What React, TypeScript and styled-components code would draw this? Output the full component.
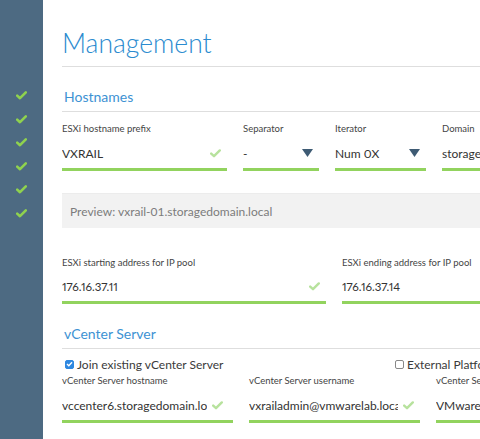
import React from "react";
import styled, { createGlobalStyle } from "styled-components";

const GlobalStyle = createGlobalStyle`
  html, body { margin: 0; padding: 0; background: #fff; overflow: hidden; }
  body { font-family: Lato, "Open Sans", Arial, sans-serif; color: #333; }
  * { box-sizing: border-box; }
`;

const Page = styled.div`
  display: flex;
  width: 480px;
  height: 439px;
  overflow: hidden;
`;

const Sidebar = styled.aside`
  flex: 0 0 43px;
  background: #4d6a82;
  display: flex;
  flex-direction: column;
  align-items: center;
  padding-top: 91px;
  gap: 14.6px;
`;

const Main = styled.main`
  flex: 1;
  min-width: 0;
  padding-left: 19px;
  overflow: hidden;
`;

const Title = styled.h1`
  margin: 29px 0 0;
  padding-bottom: 9px;
  font-size: 26.5px;
  line-height: 28px;
  font-weight: 300;
  color: #2b8bcf;
  border-bottom: 1px solid #dedede;
  white-space: nowrap;
`;

const SectionTitle = styled.h2<{ $top: number }>`
  margin: ${(p) => p.$top}px 0 0;
  padding: 0 0 5px 2px;
  font-size: 14px;
  line-height: 18px;
  font-weight: 400;
  color: #3d92d3;
  border-bottom: 1px solid #dedede;
  white-space: nowrap;
`;

const FieldRow = styled.div<{ $cols: string; $top: number }>`
  display: grid;
  grid-template-columns: ${(p) => p.$cols};
  column-gap: 16px;
  margin-top: ${(p) => p.$top}px;
  width: 600px;
`;

const Field = styled.div`
  display: flex;
  flex-direction: column;
  min-width: 0;
`;

const Label = styled.div`
  font-size: 9.5px;
  line-height: 12px;
  color: #444;
  white-space: nowrap;
`;

const InputLine = styled.div<{ $gap: number; $pad?: number }>`
  display: flex;
  align-items: center;
  gap: 5px;
  margin-top: ${(p) => p.$gap}px;
  height: 33px;
  border-bottom: 3px solid #92d35e;
  padding-right: ${(p) => p.$pad ?? 6}px;
  overflow: hidden;
`;

const Value = styled.span<{ $size?: number }>`
  flex: 1;
  min-width: 0;
  font-size: ${(p) => p.$size ?? 12}px;
  font-variant-numeric: proportional-nums;
  color: #333;
  white-space: nowrap;
  overflow: hidden;
`;

const Preview = styled.div`
  margin-top: 22px;
  height: 35px;
  width: 480px;
  background: #f2f2f2;
  border-top: 1px solid #ececec;
  display: flex;
  align-items: center;
  padding-left: 8px;
  font-size: 12px;
  color: #7c7c7c;
  white-space: nowrap;
`;

const CheckRow = styled.div`
  display: flex;
  margin-top: 8px;
  height: 14px;
  align-items: center;
  padding-left: 3px;
  width: 600px;
`;

const CheckItem = styled.label<{ $width?: number }>`
  display: flex;
  align-items: center;
  gap: 3px;
  font-size: 12px;
  color: #3a3a3a;
  white-space: nowrap;
  ${(p) => (p.$width ? `flex: 0 0 ${p.$width}px;` : "")}
`;

const Box = styled.span<{ $checked?: boolean }>`
  width: 9px;
  height: 9px;
  border-radius: 2px;
  display: inline-flex;
  align-items: center;
  justify-content: center;
  background: ${(p) => (p.$checked ? "#2f88e0" : "#fff")};
  border: 1px solid ${(p) => (p.$checked ? "#2f88e0" : "#888")};
`;

const SideCheck = () => (
  <svg width="11" height="9" viewBox="0 0 11 9">
    <path d="M1.2 4.6 L4 7.2 L9.8 1.4" fill="none" stroke="#8fd24e" strokeWidth="2.6" strokeLinecap="round" strokeLinejoin="round" />
  </svg>
);

const ValidCheck = () => (
  <svg width="11" height="9" viewBox="0 0 11 9" style={{ flex: "none" }}>
    <path d="M1.2 4.6 L4 7.2 L9.8 1.4" fill="none" stroke="#b7e29d" strokeWidth="2.4" strokeLinecap="round" strokeLinejoin="round" />
  </svg>
);

const Arrow = () => (
  <svg width="11" height="8" viewBox="0 0 11 8" style={{ flex: "none" }}>
    <path d="M0 0 H11 L5.5 8 Z" fill="#3e5b74" />
  </svg>
);

const TinyTick = () => (
  <svg width="7" height="6" viewBox="0 0 7 6">
    <path d="M1 3 L2.8 4.7 L6 1.2" fill="none" stroke="#fff" strokeWidth="1.4" />
  </svg>
);

export default function App() {
  return (
    <>
      <GlobalStyle />
      <Page>
        <Sidebar>
          {Array.from({ length: 6 }).map((_, i) => (
            <SideCheck key={i} />
          ))}
        </Sidebar>
        <Main>
          <Title>Management</Title>
          <SectionTitle $top={21}>Hostnames</SectionTitle>
          <FieldRow $cols="165px 76px 91px 200px" $top={11}>
            <Field>
              <Label>ESXi hostname prefix</Label>
              <InputLine $gap={3}>
                <Value>VXRAIL</Value>
                <ValidCheck />
              </InputLine>
            </Field>
            <Field>
              <Label>Separator</Label>
              <InputLine $gap={3}>
                <Value>-</Value>
                <Arrow />
              </InputLine>
            </Field>
            <Field>
              <Label>Iterator</Label>
              <InputLine $gap={3}>
                <Value>Num 0X</Value>
                <Arrow />
              </InputLine>
            </Field>
            <Field>
              <Label>Domain</Label>
              <InputLine $gap={3}>
                <Value>storagedomain.local</Value>
              </InputLine>
            </Field>
          </FieldRow>
          <Preview>Preview: vxrail-01.storagedomain.local</Preview>
          <FieldRow $cols="264px 264px" $top={29}>
            <Field>
              <Label>ESXi starting address for IP pool</Label>
              <InputLine $gap={2}>
                <Value $size={11.5}>176.16.37.11</Value>
                <ValidCheck />
              </InputLine>
            </Field>
            <Field>
              <Label>ESXi ending address for IP pool</Label>
              <InputLine $gap={2}>
                <Value $size={11.5}>176.16.37.14</Value>
              </InputLine>
            </Field>
          </FieldRow>
          <SectionTitle $top={21}>vCenter Server</SectionTitle>
          <CheckRow>
            <CheckItem $width={330}>
              <Box $checked>
                <TinyTick />
              </Box>
              Join existing vCenter Server
            </CheckItem>
            <CheckItem>
              <Box />
              External Platform Services Controller
            </CheckItem>
          </CheckRow>
          <FieldRow $cols="171px 171px 200px" $top={4}>
            <Field>
              <Label>vCenter Server hostname</Label>
              <InputLine $gap={3} $pad={10}>
                <Value>vccenter6.storagedomain.local</Value>
                <ValidCheck />
              </InputLine>
            </Field>
            <Field>
              <Label>vCenter Server username</Label>
              <InputLine $gap={3} $pad={6}>
                <Value>vxrailadmin@vmwarelab.local</Value>
                <ValidCheck />
              </InputLine>
            </Field>
            <Field>
              <Label>vCenter Server password</Label>
              <InputLine $gap={3}>
                <Value>VMware123!</Value>
              </InputLine>
            </Field>
          </FieldRow>
        </Main>
      </Page>
    </>
  );
}
